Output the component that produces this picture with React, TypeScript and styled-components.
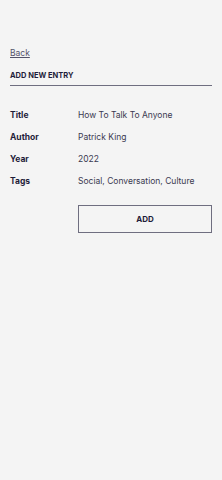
import React from 'react'
import styled, { createGlobalStyle } from 'styled-components'

const GlobalStyle = createGlobalStyle`
  html, body {
    margin: 0;
    padding: 0;
    background: #f4f4f4;
  }
  body {
    font-family: Inter, "Noto Sans", sans-serif;
    color: #1f1d3a;
  }
`

const Page = styled.div`
  padding: 40px 10px 0 10px;
  min-height: 480px;
  box-sizing: border-box;
`

const BackLink = styled.a`
  display: inline-block;
  font-size: 8.5px;
  color: #54536a;
  text-decoration: underline;
  line-height: 12px;
`

const Heading = styled.h2`
  margin: 11px 0 0 0;
  padding-bottom: 4px;
  font-size: 7.5px;
  font-weight: 700;
  letter-spacing: 0;
  line-height: 10px;
  border-bottom: 1px solid #6f6e80;
`

const Fields = styled.div`
  display: grid;
  grid-template-columns: 68px 1fr;
  row-gap: 10px;
  margin-top: 23px;
`

const Label = styled.div`
  font-size: 8.5px;
  font-weight: 700;
  line-height: 12px;
`

const Value = styled.div`
  font-size: 8.5px;
  color: #3a3950;
  line-height: 12px;
`

const Actions = styled.div`
  display: flex;
  margin-top: 18px;
  padding-left: 68px;
`

const AddButton = styled.button`
  flex: 1;
  height: 28px;
  background: transparent;
  border: 1px solid #6f6e80;
  font-family: inherit;
  font-size: 8px;
  font-weight: 700;
  color: #1f1d3a;
  cursor: pointer;
`

const rows = [
  ['Title', 'How To Talk To Anyone'],
  ['Author', 'Patrick King'],
  ['Year', '2022'],
  ['Tags', 'Social, Conversation, Culture'],
]

export default function App() {
  return (
    <>
      <GlobalStyle />
      <Page>
        <BackLink href="#">Back</BackLink>
        <Heading>ADD NEW ENTRY</Heading>
        <Fields>
          {rows.map(([k, v]) => (
            <React.Fragment key={k}>
              <Label>{k}</Label>
              <Value>{v}</Value>
            </React.Fragment>
          ))}
        </Fields>
        <Actions>
          <AddButton>ADD</AddButton>
        </Actions>
      </Page>
    </>
  )
}
